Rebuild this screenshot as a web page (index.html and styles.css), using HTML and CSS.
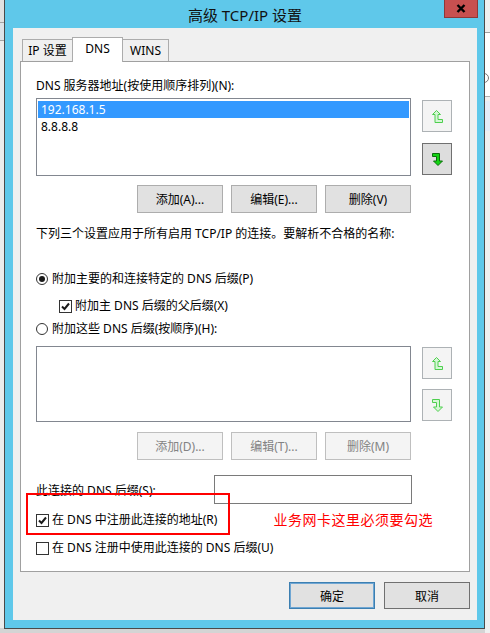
FILE: index.html
```html
<!DOCTYPE html>
<html lang="zh-CN">
<head>
    <meta charset="UTF-8">
    <meta name="viewport" content="width=device-width, initial-scale=1.0">
    <title>高级 TCP/IP 设置</title>
    <link rel="stylesheet" href="styles.css">
</head>
<body>
    <div class="edge-left"></div>
    <div class="window">
        <div class="titlebar">
            <span class="title">高级 TCP/IP 设置</span>
            <div class="close-btn">
                <svg width="10" height="9" viewBox="0 0 10 9"><path d="M1.5 1 L8.5 8 M8.5 1 L1.5 8" stroke="#000" stroke-width="2.4" fill="none"/></svg>
            </div>
        </div>
        <div class="client">
            <div class="tabs">
                <div class="tab tab-ip">IP 设置</div>
                <div class="tab tab-dns active">DNS</div>
                <div class="tab tab-wins">WINS</div>
            </div>
            <div class="panel">
                <div class="label">DNS 服务器地址(按使用顺序排列)(N):</div>
                <div class="list-group first">
                    <div class="listbox">
                        <div class="item selected">192.168.1.5</div>
                        <div class="item">8.8.8.8</div>
                    </div>
                    <div class="arrows">
                        <div class="arrow-btn disabled">
                            <svg width="11" height="13" viewBox="0 0 11 13"><path d="M4.5 0.5 L8.5 4.5 L6 4.5 L6 9.5 L10.5 9.5 L10.5 12.5 L3 12.5 L3 4.5 L0.5 4.5 Z" class="arrow-shape"/></svg>
                        </div>
                        <div class="arrow-btn">
                            <svg width="11" height="13" viewBox="0 0 11 13"><path d="M0.5 0.5 L7.5 0.5 L7.5 8 L10.5 8 L6 12.5 L1.5 8 L4.5 8 L4.5 3.5 L0.5 3.5 Z" class="arrow-shape"/></svg>
                        </div>
                    </div>
                </div>
                <div class="btn-row first">
                    <div class="btn">添加(A)...</div>
                    <div class="btn">编辑(E)...</div>
                    <div class="btn">删除(V)</div>
                </div>
                <div class="label note">下列三个设置应用于所有启用 TCP/IP 的连接。要解析不合格的名称:</div>
                <div class="option radio-first">
                    <span class="radio checked"></span>
                    <span>附加主要的和连接特定的 DNS 后缀(P)</span>
                </div>
                <div class="option indent">
                    <span class="check">
                        <svg width="9" height="9" viewBox="0 0 9 9"><path d="M1 4.5 L3.5 7 L8 1.5" stroke="#1a1a1a" stroke-width="2" fill="none"/></svg>
                    </span>
                    <span>附加主 DNS 后缀的父后缀(X)</span>
                </div>
                <div class="option radio-second">
                    <span class="radio"></span>
                    <span>附加这些 DNS 后缀(按顺序)(H):</span>
                </div>
                <div class="list-group second">
                    <div class="listbox"></div>
                    <div class="arrows">
                        <div class="arrow-btn disabled">
                            <svg width="11" height="13" viewBox="0 0 11 13"><path d="M4.5 0.5 L8.5 4.5 L6 4.5 L6 9.5 L10.5 9.5 L10.5 12.5 L3 12.5 L3 4.5 L0.5 4.5 Z" class="arrow-shape"/></svg>
                        </div>
                        <div class="arrow-btn disabled">
                            <svg width="11" height="13" viewBox="0 0 11 13"><path d="M0.5 0.5 L7.5 0.5 L7.5 8 L10.5 8 L6 12.5 L1.5 8 L4.5 8 L4.5 3.5 L0.5 3.5 Z" class="arrow-shape"/></svg>
                        </div>
                    </div>
                </div>
                <div class="btn-row second">
                    <div class="btn disabled">添加(D)...</div>
                    <div class="btn disabled">编辑(T)...</div>
                    <div class="btn disabled">删除(M)</div>
                </div>
                <div class="suffix-row">
                    <span>此连接的 DNS 后缀(S):</span>
                    <div class="textbox"></div>
                </div>
                <div class="option register">
                    <span class="check">
                        <svg width="9" height="9" viewBox="0 0 9 9"><path d="M1 4.5 L3.5 7 L8 1.5" stroke="#1a1a1a" stroke-width="2" fill="none"/></svg>
                    </span>
                    <span>在 DNS 中注册此连接的地址(R)</span>
                    <span class="annotation">业务网卡这里必须要勾选</span>
                    <div class="red-box"></div>
                </div>
                <div class="option use-suffix">
                    <span class="check"></span>
                    <span>在 DNS 注册中使用此连接的 DNS 后缀(U)</span>
                </div>
            </div>
            <div class="dialog-buttons">
                <div class="btn default">确定</div>
                <div class="btn">取消</div>
            </div>
        </div>
    </div>
    <div class="backdrop">
        <div class="bd-top"></div>
        <div class="bd-white"><span class="bd-ring"></span></div>
        <div class="bd-blue"></div>
    </div>
</body>
</html>
```

FILE: styles.css
```css
body {
    margin: 0;
    font-family: "Noto Sans", "Noto Sans CJK SC", sans-serif;
    font-size: 12px;
    color: #000;
    background: #d4d4d4;
    display: flex;
    height: 633px;
    overflow: hidden;
}
.edge-left {
    width: 4px;
    background: linear-gradient(to bottom, #e1e1e1 0 22px, #a3a3a3 22px 23px, #dde3e8 23px 40px, #a3a3a3 40px 41px, #ececec 41px 628px, #d4d4d4 628px);
}
.window {
    position: relative;
    width: 481px;
    height: 629px;
    box-sizing: border-box;
    background: #5fc8ea;
    border: 1px solid #4a4a4a;
    border-top: 0;
    padding: 0 7px 8px 8px;
    display: flex;
    flex-direction: column;
}
.titlebar {
    height: 28px;
    display: flex;
    align-items: center;
    justify-content: center;
    font-size: 15px;
    color: #111;
}
.close-btn {
    position: absolute;
    top: 0;
    right: 6px;
    width: 34px;
    height: 18px;
    box-sizing: border-box;
    background: #c75050;
    border: 1px solid #8e3838;
    border-top: 0;
    display: flex;
    align-items: center;
    justify-content: center;
}
.client {
    flex: 1;
    background: #f0f0f0;
    padding: 9px 7px 11px 7px;
    display: flex;
    flex-direction: column;
}
.tabs {
    display: flex;
    align-items: flex-end;
    height: 24px;
    padding-left: 2px;
}
.tab {
    height: 22px;
    box-sizing: border-box;
    border: 1px solid #acacac;
    border-bottom: 0;
    background: #f0f0f0;
    display: flex;
    align-items: center;
    justify-content: center;
    line-height: 16px;
}
.tab + .tab {
    margin-left: -1px;
}
.tab-ip { width: 51px; }
.tab-dns { width: 51px; }
.tab-wins { width: 47px; }
.tab.active {
    height: 25px;
    margin-bottom: -1px;
    background: #fff;
    position: relative;
    z-index: 1;
    padding-bottom: 3px;
}
.panel {
    background: #fff;
    border: 1px solid #a0a0a0;
    padding: 16px 16px 15px 15px;
    display: flex;
    flex-direction: column;
}
.label {
    line-height: 16px;
    height: 16px;
    white-space: nowrap;
}
.label.note {
    margin-top: 13px;
}
.list-group {
    display: grid;
    grid-template-columns: 375px 30px;
    column-gap: 11px;
}
.list-group.first {
    margin-top: 4px;
    height: 78px;
}
.list-group.second {
    margin-top: 9px;
    height: 76px;
}
.listbox {
    border: 1px solid #828790;
    background: #fff;
    padding: 2px 1px;
    box-sizing: border-box;
}
.item {
    height: 17px;
    line-height: 17px;
    padding-left: 3px;
}
.item.selected {
    background: #3399ff;
    color: #fff;
}
.arrows {
    display: flex;
    flex-direction: column;
}
.first .arrows {
    padding-top: 2px;
    gap: 11px;
}
.second .arrows {
    padding-top: 1px;
    gap: 10px;
}
.arrow-btn {
    width: 30px;
    height: 32px;
    box-sizing: border-box;
    border: 1px solid #707070;
    background: #dddddd;
    display: flex;
    align-items: center;
    justify-content: center;
}
.arrow-btn .arrow-shape {
    fill: #13d313;
    stroke: #0b6e0b;
    stroke-width: 1;
}
.arrow-btn.disabled {
    border-color: #adb2b5;
    background: #f4f4f4;
}
.arrow-btn.disabled .arrow-shape {
    fill: #d6f7d6;
    stroke: #4fcf4f;
}
.btn-row {
    display: flex;
    justify-content: flex-end;
    gap: 8px;
    padding-right: 42px;
}
.btn-row.first { margin-top: 9px; }
.btn-row.second { margin-top: 10px; }
.btn {
    width: 86px;
    height: 28px;
    box-sizing: border-box;
    border: 1px solid #adadad;
    background: #e1e1e1;
    display: flex;
    align-items: center;
    justify-content: center;
    white-space: nowrap;
}
.btn.disabled {
    border-color: #bfbfbf;
    background: #f4f4f4;
    color: #838383;
}
.option {
    display: flex;
    align-items: center;
    gap: 4px;
    height: 16px;
    line-height: 16px;
    white-space: nowrap;
}
.radio-first { margin-top: 29px; }
.option.indent {
    margin-top: 11px;
    margin-left: 23px;
    gap: 3px;
}
.radio-second { margin-top: 7px; }
.radio {
    width: 12px;
    height: 12px;
    box-sizing: border-box;
    border: 1px solid #333;
    border-radius: 50%;
    background: #fff;
    display: flex;
    align-items: center;
    justify-content: center;
}
.radio.checked::after {
    content: "";
    width: 6px;
    height: 6px;
    border-radius: 50%;
    background: #1a1a1a;
}
.check {
    width: 13px;
    height: 13px;
    box-sizing: border-box;
    border: 1px solid #333;
    background: #fff;
    display: flex;
    align-items: center;
    justify-content: center;
}
.suffix-row {
    margin-top: 15px;
    height: 29px;
    display: flex;
    align-items: center;
    padding-right: 41px;
}
.textbox {
    margin-left: auto;
    width: 198px;
    height: 29px;
    box-sizing: border-box;
    border: 1px solid #7a7a7a;
    background: #fff;
}
.option.register {
    position: relative;
    margin-top: 8px;
    gap: 3px;
}
.annotation {
    margin-left: auto;
    margin-right: 20px;
    color: #ff0000;
    font-size: 14px;
    letter-spacing: 0.5px;
}
.red-box {
    position: absolute;
    left: -10px;
    top: -19px;
    width: 204px;
    height: 42px;
    box-sizing: border-box;
    border: 2px solid #ff0000;
}
.option.use-suffix {
    margin-top: 12px;
    gap: 3px;
}
.dialog-buttons {
    margin-top: 10px;
    display: flex;
    justify-content: flex-end;
    gap: 9px;
}
.dialog-buttons .btn {
    height: 27px;
    border-color: #707070;
}
.dialog-buttons .btn.default {
    border-color: #3c7fb1;
    box-shadow: inset 0 0 0 1px #6fa6d3;
}
.backdrop {
    flex: 1;
    background: #f0f0f0;
    overflow: hidden;
    display: flex;
    flex-direction: column;
}
.bd-top {
    height: 32px;
    border-bottom: 1px solid #a0a0a0;
}
.bd-white {
    height: 64px;
    background: #fff;
    border-bottom: 1px solid #b0b0b0;
    padding-top: 40px;
    box-sizing: border-box;
}
.bd-ring {
    display: block;
    width: 10px;
    height: 10px;
    margin-left: -6px;
    box-sizing: border-box;
    border: 1.5px solid #777;
    border-radius: 50%;
}
.bd-blue {
    margin-top: 4px;
    height: 30px;
    background: #e6edf8;
}
```
